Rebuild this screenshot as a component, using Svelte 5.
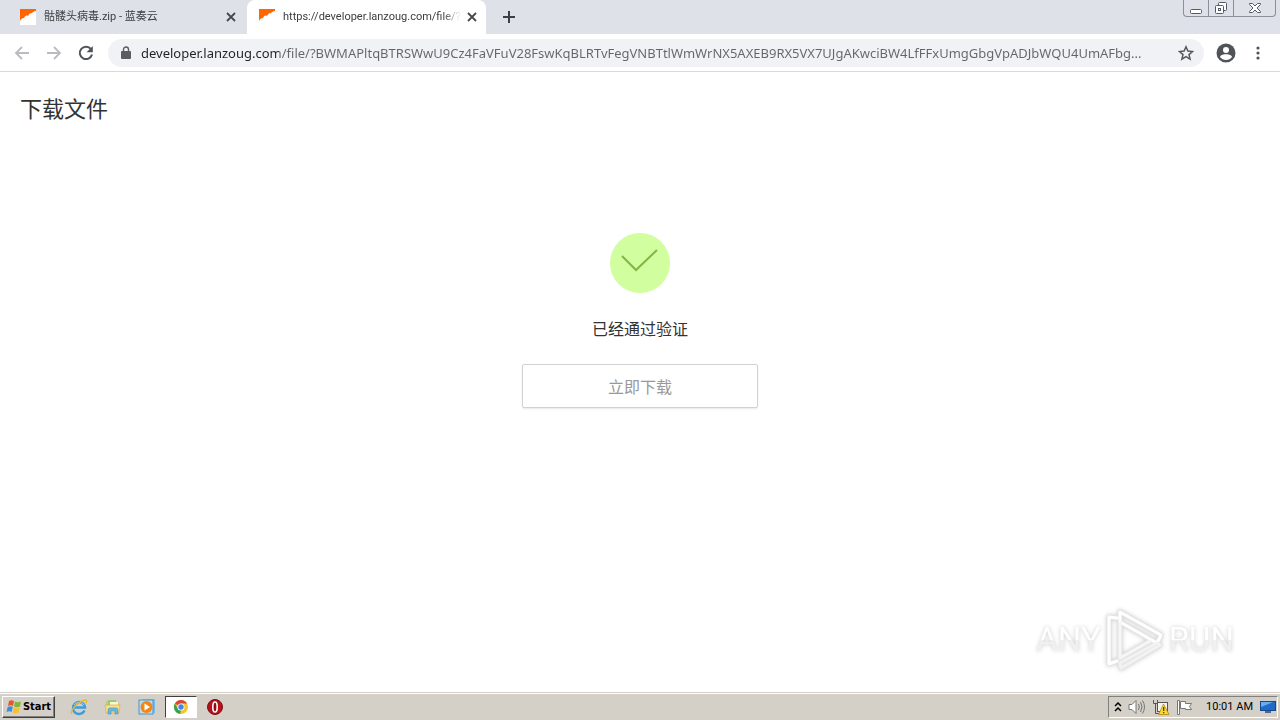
<script>
  const tabs = [
    { id: 1, title: '骷髅头病毒.zip - 蓝奏云' },
    { id: 2, title: 'https://developer.lanzoug.com/file/?' }
  ];

  let activeTab = $state(2);
  let url = $state(
    'developer.lanzoug.com/file/?BWMAPltqBTRSWwU9Cz4FaVFuV28FswKqBLRTvFegVNBTtlWmWrNX5AXEB9RX5VX7UJgAKwciBW4LfFFxUmgGbgVpADJbWQU4UmAFbg...'
  );
</script>

<div class="screen">
  <header class="tabstrip">
    <div class="tabs">
      {#each tabs as tab}
        <div class="tab" class:active={activeTab === tab.id}>
          <svg class="favicon" viewBox="0 0 16 16">
            <rect width="16" height="16" fill="#fff" />
            <path d="M0 0H16V2C14 2 13 3 12 4C10 4 9 5 8 7C6 6 5 7 4 9C2 9 1 10 0 12Z" fill="#ff6600" />
          </svg>
          <button class="tab-title" onclick={() => (activeTab = tab.id)}>{tab.title}</button>
          <button class="tab-close" aria-label="Close tab">
            <svg width="10" height="10" viewBox="0 0 10 10"><path d="M1 1L9 9M9 1L1 9" stroke="#45494d" stroke-width="1.8" /></svg>
          </button>
        </div>
      {/each}
      <button class="new-tab" aria-label="New tab">
        <svg width="12" height="12" viewBox="0 0 12 12"><path d="M6 0V12M0 6H12" stroke="#3c4043" stroke-width="2" /></svg>
      </button>
    </div>
    <div class="window-buttons">
      <button aria-label="Minimize">
        <svg width="14" height="14" viewBox="0 0 14 14"><rect x="1.5" y="8.5" width="11" height="4" rx="1" fill="#fff" stroke="#555b66" /></svg>
      </button>
      <button aria-label="Restore">
        <svg width="14" height="14" viewBox="0 0 14 14">
          <rect x="4.5" y="1.5" width="8" height="8" rx="1" fill="#fff" stroke="#555b66" />
          <rect x="1.5" y="4.5" width="8" height="8" rx="1" fill="#fff" stroke="#555b66" />
          <rect x="4.5" y="7.5" width="2" height="2" fill="#fff" stroke="#555b66" />
        </svg>
      </button>
      <button class="wide" aria-label="Close">
        <svg width="14" height="14" viewBox="0 0 14 14">
          <path d="M1.5 2.5H4.5L7 5L9.5 2.5H12.5V3.5L9 7L12.5 10.5V11.5H9.5L7 9L4.5 11.5H1.5V10.5L5 7L1.5 3.5Z" fill="#fff" stroke="#555b66" />
        </svg>
      </button>
    </div>
  </header>

  <nav class="toolbar">
    <button class="nav-btn" aria-label="Back">
      <svg width="16" height="16" viewBox="0 0 16 16"><path d="M15 8H2M8 2L2 8L8 14" fill="none" stroke="#b9bbbe" stroke-width="1.8" /></svg>
    </button>
    <button class="nav-btn" aria-label="Forward">
      <svg width="16" height="16" viewBox="0 0 16 16"><path d="M1 8H14M8 2L14 8L8 14" fill="none" stroke="#b9bbbe" stroke-width="1.8" /></svg>
    </button>
    <button class="nav-btn" aria-label="Reload">
      <svg width="16" height="16" viewBox="0 0 16 16">
        <path d="M13 4.2A6.2 6.2 0 1 0 14 9.5" fill="none" stroke="#505458" stroke-width="2" />
        <path d="M14.8 1V7.2H8.6Z" fill="#505458" />
      </svg>
    </button>
    <div class="omnibox">
      <svg width="10" height="13" viewBox="0 0 10 13">
        <path d="M2.5 6V3.5A2.5 2.5 0 0 1 7.5 3.5V6" fill="none" stroke="#5a5e62" stroke-width="1.4" />
        <rect y="5" width="10" height="8" rx="1" fill="#5a5e62" />
      </svg>
      <input type="text" aria-label="Address" bind:value={url} spellcheck="false" />
      <button class="star" aria-label="Bookmark this page">
        <svg width="16" height="16" viewBox="0 0 16 16">
          <path d="M8 1.8L9.9 6.1L14.5 6.5L11 9.6L12.1 14.1L8 11.7L3.9 14.1L5 9.6L1.5 6.5L6.1 6.1Z" fill="none" stroke="#55595d" stroke-width="1.5" />
        </svg>
      </button>
    </div>
    <button class="nav-btn" aria-label="Profile">
      <svg width="20" height="20" viewBox="0 0 20 20">
        <circle cx="10" cy="10" r="9.5" fill="#505459" />
        <circle cx="10" cy="7" r="3" fill="#fff" />
        <path d="M4 14C5 11.5 8 11.3 10 11.3S15 11.5 16 14C14.5 16 12.5 17 10 17S5.5 16 4 14Z" fill="#fff" />
      </svg>
    </button>
    <button class="nav-btn" aria-label="Menu">
      <svg width="4" height="16" viewBox="0 0 4 16" fill="#505459">
        <circle cx="2" cy="3" r="1.6" /><circle cx="2" cy="8" r="1.6" /><circle cx="2" cy="13" r="1.6" />
      </svg>
    </button>
  </nav>

  <main class="page">
    <h1>下载文件</h1>
    <section class="verify">
      <svg width="60" height="60" viewBox="0 0 60 60">
        <circle cx="30" cy="30" r="30" fill="#d1fe9f" />
        <path d="M12 23L26 37L47 17" fill="none" stroke="#83b545" stroke-width="2" />
      </svg>
      <p>已经通过验证</p>
      <button class="download">立即下载</button>
    </section>
    <div class="watermark">
      <span>ANY</span>
      <svg width="60" height="64" viewBox="0 0 60 64" fill="none" stroke-linejoin="round" stroke-linecap="round">
        <g stroke="#e4e4e4" stroke-width="5">
          <path d="M12 10L4 9V56L12 53" />
          <path d="M15 4L56 27L52 35L15 14Z" />
          <path d="M15 14V50L45 33M16 60L55 37L52 35L15 55Z" />
        </g>
        <g stroke="#fff" stroke-width="3">
          <path d="M12 10L4 9V56L12 53" />
          <path d="M15 4L56 27L52 35L15 14Z" />
          <path d="M15 14V50L45 33" stroke="#f6f6f6" />
          <path d="M16 60L55 37L52 35L15 55Z" stroke="#f2f2f2" />
        </g>
      </svg>
      <span>RUN</span>
    </div>
  </main>

  <footer class="taskbar">
    <button class="start">
      <svg width="16" height="16" viewBox="0 0 16 16">
        <path d="M3 2C5 1 6 1 8 2L7 7C5 6 4 6 2 7Z" fill="#e8562a" />
        <path d="M9 2.5C11 3.5 13 3.5 15 2.5L14 7.5C12 8.5 10 8.5 8 7.5Z" fill="#78b93a" />
        <path d="M1.7 8C3.5 7 5 7 6.8 8L5.5 13C4 12 2.5 12 .5 13Z" fill="#3b8ede" />
        <path d="M7.7 8.5C9.5 9.5 11.5 9.5 13.7 8.5L12.5 13.5C10.5 14.5 8.5 14.5 6.5 13.5Z" fill="#f8c02c" />
      </svg>
      Start
    </button>
    <div class="launchers">
      <button aria-label="Internet Explorer">
        <svg width="18" height="18" viewBox="0 0 18 18" fill="none">
          <path d="M14.5 12.5A6 6 0 1 1 15 9.5H4.5" stroke="#3b9ddd" stroke-width="2.4" />
          <path d="M4 7C6 3.5 12 3.5 14 7" stroke="#8dd4f7" stroke-width="1" />
          <path d="M2 16C-1 14 6 6 12 3C15 1.5 18 1.5 16 5" stroke="#eeb52e" stroke-width="1.5" />
        </svg>
      </button>
      <button aria-label="Windows Explorer">
        <svg width="18" height="18" viewBox="0 0 18 18">
          <path d="M2 3H7L8 5H15V14H2Z" fill="#e5bf57" />
          <path d="M4 2H12V7H4Z" fill="#91cd87" /><path d="M6 4H14V8H6Z" fill="#fff5c6" />
          <path d="M1 7H16L15 15H2Z" fill="#f7df86" stroke="#cfaa4d" stroke-width=".6" />
          <path d="M4 16V12Q4 10 6 10H12Q14 10 14 12V16H11V13H7V16Z" fill="#69b8dd" stroke="#4790b5" stroke-width=".6" />
        </svg>
      </button>
      <button aria-label="Media Player">
        <svg width="18" height="18" viewBox="0 0 18 18">
          <rect x="5" y="1" width="12" height="14" fill="#77bdec" /><rect x="1" y="2" width="14" height="14" fill="#b6ddf5" stroke="#4d93c8" />
          <circle cx="8.5" cy="9" r="6" fill="#f58612" /><path d="M6.5 5.5L12 9L6.5 12.5Z" fill="#fff" />
        </svg>
      </button>
      <button class="pressed" aria-label="Chrome">
        <svg width="16" height="16" viewBox="0 0 16 16">
          <circle cx="8" cy="8" r="7" fill="#f2c62d" />
          <path d="M8 8L1.9 4.5A7 7 0 0 1 14.1 4.5H8Z" fill="#dc4435" />
          <path d="M1.9 4.5L5 10L8 11.5L7 15A7 7 0 0 1 1.9 4.5Z" fill="#35a252" />
          <circle cx="8" cy="8" r="3.5" fill="#fff" /><circle cx="8" cy="8" r="2.7" fill="#4583ec" />
        </svg>
      </button>
      <button aria-label="Opera">
        <svg width="18" height="18" viewBox="0 0 18 18">
          <circle cx="9" cy="9" r="7.5" fill="#b5121b" stroke="#7c0c12" />
          <ellipse cx="9" cy="9" rx="2.2" ry="5" fill="#8c0f16" stroke="#fff" stroke-width="1.6" />
        </svg>
      </button>
    </div>
    <div class="tray">
      <svg width="8" height="10" viewBox="0 0 8 10"><path d="M1 4L4 1L7 4M1 9L4 6L7 9" fill="none" stroke="#000" stroke-width="1.5" /></svg>
      <svg width="18" height="16" viewBox="0 0 18 16">
        <path d="M1 5.5H4L8 1.5V14.5L4 10.5H1Z" fill="#fff" stroke="#777" />
        <path d="M10.5 5Q12 8 10.5 11M12.5 3Q15.5 8 12.5 13M14.5 1.5Q18.5 8 14.5 14.5" fill="none" stroke="#777" />
      </svg>
      <svg width="18" height="16" viewBox="0 0 18 16">
        <rect x="5.5" y="3.5" width="10" height="9" fill="#f3f3f3" stroke="#555" />
        <path d="M1.5 1V4.5H5.5V1M3.5 4.5V14.5H8" fill="none" stroke="#555" />
        <path d="M11.5 5L17 15.5H6.5Z" fill="#ffd629" stroke="#b58a0b" stroke-width=".8" />
        <path d="M11.7 8V12M11.7 13V14.2" stroke="#333" stroke-width="1.2" />
      </svg>
      <svg width="18" height="16" viewBox="0 0 18 16">
        <path d="M4.5 2.5H9.5V4.5H15.5L13.5 7.5L15.5 10.5H9.5V9.5H4.5Z" fill="#fff" stroke="#777" />
        <path d="M1.5 1.5H3.5V15.5H1.5Z" fill="#fff" stroke="#777" />
      </svg>
      <time>10:01 AM</time>
      <svg width="16" height="14" viewBox="0 0 16 14">
        <rect x=".5" y="1.5" width="15" height="9" fill="#216bc8" stroke="#17488b" /><path d="M1 2H13L1 7Z" fill="#68adf0" /><path d="M5 11H11V13H5Z" fill="#496c93" />
      </svg>
    </div>
  </footer>
</div>

<style>
  :global(body) { margin: 0; }
  .screen {
    display: flex;
    flex-direction: column;
    height: 100vh;
    overflow: hidden;
    background: #fff;
    font-family: Roboto, "Noto Sans CJK SC", sans-serif;
  }
  button {
    display: flex;
    align-items: center;
    justify-content: center;
    padding: 0;
    border: 0;
    background: none;
    font-family: inherit;
  }
  svg { flex: none; }

  .tabstrip {
    display: flex;
    justify-content: space-between;
    height: 34px;
    background: #dee1e8;
  }
  .tabs { display: flex; padding-left: 8px; }
  .tab {
    display: flex;
    align-items: center;
    box-sizing: border-box;
    width: 239px;
    height: 34px;
    padding: 0 10px 0 12px;
    border-radius: 8px 8px 0 0;
  }
  .tab.active { background: #fff; }
  .favicon { width: 16px; height: 16px; }
  .tab-title {
    flex: 1;
    justify-content: flex-start;
    margin: 0 6px 0 8px;
    color: #3c4043;
    font-size: 11px;
    line-height: 16px;
    white-space: nowrap;
    mask-image: linear-gradient(90deg, #000 90%, transparent);
  }
  .tab-close { width: 12px; height: 16px; }
  .new-tab { width: 28px; margin-left: 9px; }
  .window-buttons {
    display: flex;
    height: 16px;
    margin-right: 4px;
    border: 1px solid #8b8f99;
    border-top: 0;
    border-radius: 0 0 4px 4px;
  }
  .window-buttons button { width: 25px; border-right: 1px solid #8b8f99; }
  .window-buttons .wide { width: 41px; border-right: 0; }

  .toolbar {
    display: flex;
    align-items: center;
    height: 37px;
    padding: 0 6px;
    border-bottom: 1px solid #d9d9d9;
  }
  .nav-btn { width: 32px; height: 28px; }
  .omnibox {
    display: flex;
    flex: 1;
    align-items: center;
    gap: 10px;
    height: 28px;
    margin: 0 6px;
    padding: 0 8px 0 13px;
    border-radius: 14px;
    background: #f0f2f5;
  }
  /* host part is darker than the path */
  .omnibox input {
    flex: 1;
    min-width: 0;
    padding: 0;
    border: 0;
    outline: 0;
    background: linear-gradient(90deg, #202124 138px, #62666a 138px);
    background-clip: text;
    color: transparent;
    font-family: "Noto Sans", sans-serif;
    font-size: 13px;
    line-height: 20px;
    text-overflow: ellipsis;
  }
  .star { width: 20px; height: 20px; }

  .page {
    display: flex;
    flex: 1;
    flex-direction: column;
    min-height: 0;
    font-family: "Noto Sans", "Noto Sans CJK SC", sans-serif;
  }
  h1 {
    margin: 20px 20px 0;
    color: #333;
    font-size: 22px;
    font-weight: 400;
    line-height: 32px;
  }
  .verify {
    display: flex;
    flex-direction: column;
    align-items: center;
    margin-top: 109px;
  }
  .verify p {
    margin: 24px 0 23px;
    color: #333;
    font-size: 16px;
    line-height: 24px;
  }
  .download {
    width: 236px;
    height: 44px;
    border: 1px solid #d2d2d2;
    border-radius: 2px;
    background: #fff;
    box-shadow: 0 1px 2px #e8e8e8;
    color: #999;
    font-size: 16px;
  }
  .watermark {
    display: flex;
    align-items: center;
    gap: 4px;
    margin: auto 46px 20px auto;
    font-family: Roboto, "Liberation Sans", sans-serif;
    font-size: 33px;
    line-height: 48px;
    filter: drop-shadow(0 0 2px #ccc);
  }
  .watermark span {
    background: linear-gradient(#fff 50%, #f0f0f0 50%);
    background-clip: text;
    color: transparent;
  }

  .taskbar {
    display: flex;
    align-items: center;
    box-sizing: border-box;
    height: 28px;
    padding: 0 2px;
    border-top: 1px solid #d4d0c8;
    background: #d4d0c8;
    box-shadow: inset 0 1px #fff;
  }
  .start {
    gap: 1px;
    box-sizing: border-box;
    width: 53px;
    height: 22px;
    border: 1px solid;
    border-color: #fff #404040 #404040 #fff;
    box-shadow: inset -1px -1px #808080;
    color: #000;
    font-family: "DejaVu Sans Condensed", "DejaVu Sans", sans-serif;
    font-size: 11px;
    font-weight: 700;
  }
  .launchers { display: flex; gap: 2px; margin-left: 8px; }
  .launchers button { box-sizing: border-box; width: 32px; height: 22px; }
  .launchers .pressed {
    border: 1px solid;
    border-color: #404040 #fff #fff #404040;
    background: #fff;
  }
  .tray {
    display: flex;
    align-items: center;
    gap: 6px;
    box-sizing: border-box;
    height: 22px;
    margin-left: auto;
    padding: 0 1px 0 5px;
    border: 1px solid;
    border-color: #808080 #fff #fff #808080;
  }
  time {
    margin: 0 1px 0 6px;
    color: #000;
    font-size: 11px;
  }
</style>
